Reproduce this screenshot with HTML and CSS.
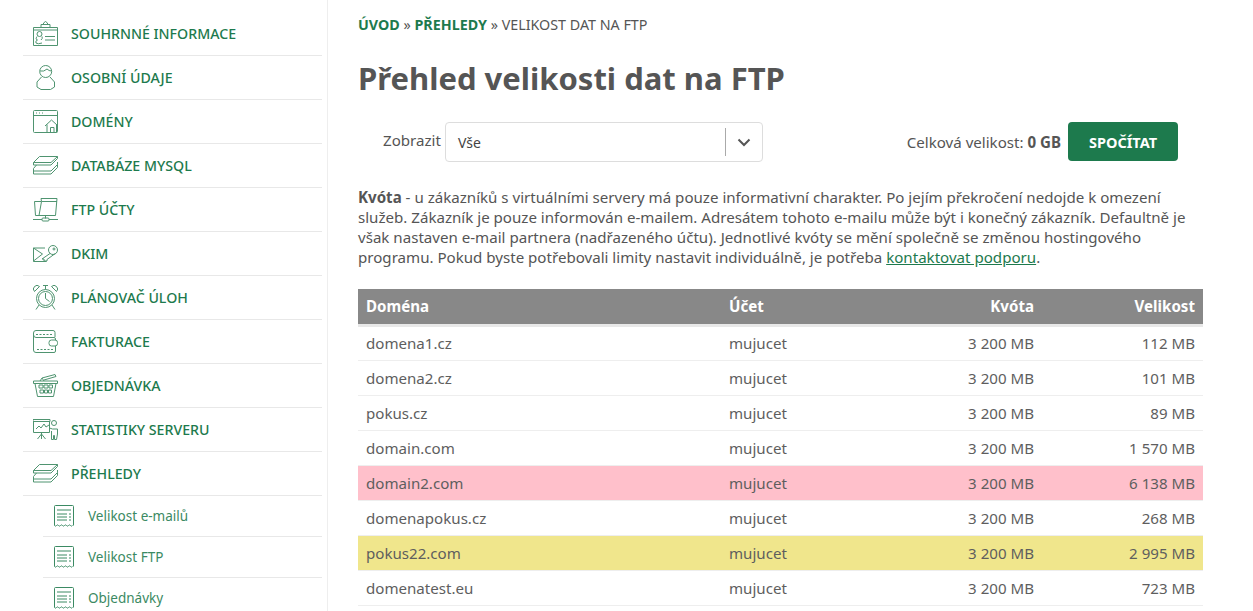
FILE: index.html
```html
<!DOCTYPE html>
<html lang="cs">
<head>
<meta charset="utf-8">
<title>Přehled velikosti dat na FTP</title>
<link rel="stylesheet" href="styles.css">
</head>
<body>
<svg class="defs" width="0" height="0" aria-hidden="true">
  <symbol id="i-doc" viewBox="0 0 20 22">
    <path d="M.5 20.500V1.500q0-1 1-1h17q1 0 1 1v19"/>
    <path d="M.5 20.500q1 1.200 2 0t2 0 2 0 2 0 2 0 2 0 2 0 2 0 2 0"/>
    <path d="M3 5h14M3 9h10M15 9h2M3 12h10M15 12h2M3 15h10M15 15h2"/>
  </symbol>
  <symbol id="i-stack" viewBox="0 0 25 19">
    <path d="M6.500 .5h18L18 6.500H.5z"/>
    <path d="M3.500 9 .5 12.500V15H18l6.500-6.500V6"/>
    <path d="M.5 15v3H18l6.500-6.500V8.500"/>
    <path d="M.5 6.500V9H18l6.500-6.500V.5"/>
  </symbol>
</svg>
<div class="layout">
  <nav class="side">
    <ul class="menu">
      <li class="item"><svg class="ico" viewBox="0 0 25 25"><path d="M.5 6.500h24v18H.5zM.5 9h24"/><path d="M8 6.500v-3h9v3M10.500 3.500V2q2-3 4 0v1.500"/><circle cx="6.500" cy="13" r="2.500"/><path d="M4 15.500q-2 3 .5 3.500-2.500 1-1.500 3 2 1.500 6 0M9 15.500q1 2-1 3.500M12 15.500h10M12 19h10"/></svg><span>SOUHRNNÉ INFORMACE</span></li>
      <li class="item"><svg class="ico" viewBox="0 0 25 25"><circle cx="12.700" cy="6.500" r="6"/><path d="M7 6q4 1 7-2 2 2 4.500 2"/><path d="M8.500 12 4 17v5l4 2.500h9.500l4-2.500v-5L17 12"/></svg><span>OSOBNÍ ÚDAJE</span></li>
      <li class="item"><svg class="ico" viewBox="0 0 25 23"><rect x=".5" y=".5" width="24" height="22" rx="1"/><path d="M.5 5.500h24M3 3h1M6 3h1M9 3h1"/><path d="M12 16l6.500-6 6 5.500M14 14.500V22.500M23.500 14.500V22.500M17.500 22.500v-5h3.500v5"/></svg><span>DOMÉNY</span></li>
      <li class="item"><svg class="ico"><use href="#i-stack"/></svg><span>DATABÁZE MYSQL</span></li>
      <li class="item"><svg class="ico" viewBox="0 0 25 23"><path d="M2.500 17.500 1.500 3.500h7l-.5-3h16l-1.500 17zM8.500 3.500 6 17.500M24 3.500H9"/><path d="M12.500 17.500v3M0 21.500h9M16 21.500h9"/><rect x="9" y="20" width="7" height="3" rx="1"/></svg><span>FTP ÚČTY</span></li>
      <li class="item"><svg class="ico" viewBox="0 0 25 17"><path d="M12 3H.5v13.500h13M.5 3l9 6-9 7"/><circle cx="20" cy="5" r="4.500"/><circle cx="21" cy="4" r="1"/><path d="M17 8.500 9 14h2v2h3v-1.500l8-5.800"/></svg><span>DKIM</span></li>
      <li class="item"><svg class="ico" viewBox="0 0 25 25"><circle cx="12.500" cy="13.500" r="9"/><circle cx="12.500" cy="13.500" r="7"/><path d="M12.500 8v5.500l4 3M12.500 .5v4M10 .5h5"/><path d="M1.500 6.500a3.500 3.500 0 0 1 5-5zM23.500 6.500a3.500 3.500 0 0 0-5-5zM6 20l-3 4.500M19 20l3 4.500"/></svg><span>PLÁNOVAČ ÚLOH</span></li>
      <li class="item"><svg class="ico" viewBox="0 0 25 23"><path d="M22 7V2.500q0-2-2-2H3q-2.500 0-2.500 2.500v17q0 2.500 2.500 2.500h18q1.500 0 1.500-1.500V16"/><path d="M.5 4.500q0 3 2.500 3h18q1.500 0 1.500 1.500V10"/><path d="M3 4.500h17M4 19.500h16" stroke-dasharray="2 1.500"/><rect x="16" y="10" width="8.500" height="6" rx="2.500"/></svg><span>FAKTURACE</span></li>
      <li class="item"><svg class="ico" viewBox="0 0 25 23"><path d="M.5 7h24v2.500H.5zM2 9.500 4.500 22.500h16L23 9.500"/><path d="M7 7l2-3 13-3.500 1 2L11 6M9 4l2 3"/><path d="M6 11h4v3H6zM11 11h4v3h-4zM16 11h3.500v3H16zM7 16h3.500v3H7zM11.500 16h3v3h-3zM15.500 16h3v3h-3z"/></svg><span>OBJEDNÁVKA</span></li>
      <li class="item"><svg class="ico" viewBox="0 0 25 21"><path d="M.5 2.500h16v11H.5zM0 .5h17v2H0z"/><path d="M3 10l3-3 2 2 3-4 2 3 3-2"/><path d="M8.500 13.500V20M8.500 15l-4 5M8.500 15l4 5"/><circle cx="21" cy="4" r="2.500"/><path d="M16.500 9l3 1h5v5l-1 5.500h-2v-4h-1v4h-2V12"/></svg><span>STATISTIKY SERVERU</span></li>
      <li class="item"><svg class="ico"><use href="#i-stack"/></svg><span>PŘEHLEDY</span></li>
      <li class="sub"><svg class="sub-ico"><use href="#i-doc"/></svg><span>Velikost e-mailů</span></li>
      <li class="sub"><svg class="sub-ico"><use href="#i-doc"/></svg><span>Velikost FTP</span></li>
      <li class="sub"><svg class="sub-ico"><use href="#i-doc"/></svg><span>Objednávky</span></li>
    </ul>
  </nav>
  <main class="content">
    <p class="crumbs"><a class="crumb-link">ÚVOD</a> » <a class="crumb-link">PŘEHLEDY</a> » VELIKOST DAT NA FTP</p>
    <h1 class="title">Přehled velikosti dat na FTP</h1>
    <div class="filters">
      <div class="filter-left">
        <label class="filter-label">Zobrazit</label>
        <div class="select">
          <span class="select-value">Vše</span>
          <span class="select-sep"></span>
          <svg class="chev" viewBox="0 0 14 9"><path d="M1.500 1.500 7 7l5.500-5.500"/></svg>
        </div>
      </div>
      <div class="filter-right">
        <span class="total">Celková velikost: <b>0 GB</b></span>
        <button class="btn">SPOČÍTAT</button>
      </div>
    </div>
    <p class="note"><b>Kvóta</b> - u zákazníků s virtuálními servery má pouze informativní charakter. Po jejím překročení nedojde k omezení služeb. Zákazník je pouze informován e-mailem. Adresátem tohoto e-mailu může být i konečný zákazník. Defaultně je však nastaven e-mail partnera (nadřazeného účtu). Jednotlivé kvóty se mění společně se změnou hostingového programu. Pokud byste potřebovali limity nastavit individuálně, je potřeba <a class="note-link">kontaktovat podporu</a>.</p>
    <table class="grid">
      <thead>
        <tr><th class="c1">Doména</th><th class="c2">Účet</th><th class="c3">Kvóta</th><th class="c4">Velikost</th></tr>
      </thead>
      <tbody>
        <tr><td>domena1.cz</td><td>mujucet</td><td class="r">3 200 MB</td><td class="r">112 MB</td></tr>
        <tr><td>domena2.cz</td><td>mujucet</td><td class="r">3 200 MB</td><td class="r">101 MB</td></tr>
        <tr><td>pokus.cz</td><td>mujucet</td><td class="r">3 200 MB</td><td class="r">89 MB</td></tr>
        <tr><td>domain.com</td><td>mujucet</td><td class="r">3 200 MB</td><td class="r">1 570 MB</td></tr>
        <tr class="over"><td>domain2.com</td><td>mujucet</td><td class="r">3 200 MB</td><td class="r">6 138 MB</td></tr>
        <tr><td>domenapokus.cz</td><td>mujucet</td><td class="r">3 200 MB</td><td class="r">268 MB</td></tr>
        <tr class="warn"><td>pokus22.com</td><td>mujucet</td><td class="r">3 200 MB</td><td class="r">2 995 MB</td></tr>
        <tr><td>domenatest.eu</td><td>mujucet</td><td class="r">3 200 MB</td><td class="r">723 MB</td></tr>
      </tbody>
    </table>
  </main>
</div>
</body>
</html>
```
FILE: styles.css
```css
* { box-sizing: border-box; }
html, body { margin: 0; height: 611px; overflow: hidden; background: #fff; }
body { font-family: "Noto Sans", "Open Sans", sans-serif; color: #555; font-size: 15.100px; }
.defs { position: absolute; }
.layout { display: flex; align-items: flex-start; height: 611px; overflow: hidden; }
.side { width: 328px; flex: none; height: 611px; padding: 12px 5px 0 23px; border-right: 1px solid #eee; }
.menu { list-style: none; margin: 0; padding: 0; }
.item { display: flex; align-items: center; height: 44px; border-bottom: 1px solid #e8e8e8; color: #1d7a4d; font-size: 14.200px; font-weight: 500; padding-left: 10px; }
.item span { margin-left: 13px; }
.ico { width: 25px; height: 25px; flex: none; fill: none; stroke: #4f9470; stroke-width: 1; }
.sub { display: flex; align-items: center; height: 41px; margin-left: 20px; border-bottom: 1px solid #e8e8e8; color: #3b8a63; font-size: 13.500px; padding-left: 11px; }
.sub span { margin-left: 14px; }
.sub-ico { width: 20px; height: 22px; flex: none; fill: none; stroke: #3b8a63; stroke-width: 1; }
.content { width: 845px; margin-left: 30px; flex: none; }
.crumbs { margin: 16px 0 0; font-size: 14.300px; line-height: 18px; }
.crumb-link { color: #1d7a4d; font-weight: 700; }
.title { margin: 24px 0 0; font-size: 31px; line-height: 40px; font-weight: 700; color: #555; }
.filters { display: flex; justify-content: space-between; align-items: flex-start; margin-top: 24px; padding-right: 25px; }
.filter-left { display: flex; align-items: center; padding-left: 25px; }
.filter-label { margin: -4px 4px 0 0; }
.select { display: flex; align-items: center; width: 318px; height: 40px; border: 1px solid #ddd; border-radius: 4px; padding-left: 12px; color: #444; font-size: 14px; }
.select-value { flex: 1; }
.select-sep { width: 1px; height: 28px; background: #aaa; }
.chev { width: 14px; height: 9px; margin: 0 11px; fill: none; stroke: #555; stroke-width: 2; }
.filter-right { display: flex; align-items: center; gap: 7px; }
.btn { width: 110px; height: 39px; border: 0; border-radius: 4px; background: #1d7a4d; color: #fff; font: 700 14.500px "Noto Sans", sans-serif; }
.note { margin: 25px 0 0; line-height: 20px; }
.note-link { color: #1d7a4d; text-decoration: underline; }
.grid { width: 845px; margin-top: 22px; border-collapse: collapse; table-layout: fixed; }
th { background: #888; color: #fff; font-weight: 700; height: 36px; padding: 0 8px; text-align: left; border-bottom: 3px solid #e8e8e8; }
td { height: 35px; padding: 0 8px; border-bottom: 1px solid #eee; color: #5e5e5e; }
.c1 { width: 363px; }
.c2 { width: 170px; }
.c3 { width: 151px; text-align: right; }
.c4 { width: 161px; text-align: right; }
.r { text-align: right; }
.over td { background: #ffc0cb; }
.warn td { background: #f0e68c; }
```
